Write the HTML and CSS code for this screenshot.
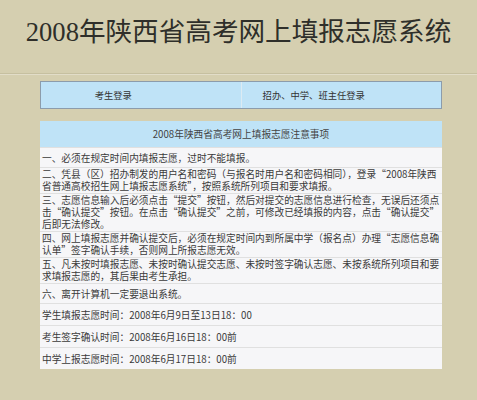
FILE: index.html
```html
<!DOCTYPE html>
<html lang="zh-CN">
<head>
    <meta charset="UTF-8">
    <meta name="viewport" content="width=device-width, initial-scale=1.0">
    <title>2008年陕西省高考网上填报志愿系统</title>
    <link rel="stylesheet" href="styles.css">
</head>
<body>
    <div class="header">
        <h1 class="title">2008年陕西省高考网上填报志愿系统</h1>
    </div>

    <div class="login-bar">
        <a class="login-tab" href="#">考生登录</a>
        <a class="login-tab" href="#">招办、中学、班主任登录</a>
    </div>

    <div class="notice">
        <div class="notice-head">2008年陕西省高考网上填报志愿注意事项</div>
        <div class="notice-row single">一、必须在规定时间内填报志愿，过时不能填报。</div>
        <div class="notice-row">二、凭县（区）招办制发的用户名和密码（与报名时用户名和密码相同），登录“2008年陕西<br>省普通高校招生网上填报志愿系统”，按照系统所列项目和要求填报。</div>
        <div class="notice-row">三、志愿信息输入后必须点击“提交”按钮，然后对提交的志愿信息进行检查，无误后还须点<br>击“确认提交”按钮。在点击“确认提交”之前，可修改已经填报的内容，点击“确认提交”<br>后即无法修改。</div>
        <div class="notice-row">四、网上填报志愿并确认提交后，必须在规定时间内到所属中学（报名点）办理“志愿信息确<br>认单”签字确认手续，否则网上所报志愿无效。</div>
        <div class="notice-row">五、凡未按时填报志愿、未按时确认提交志愿、未按时签字确认志愿、未按系统所列项目和要<br>求填报志愿的，其后果由考生承担。</div>
        <div class="notice-row single">六、离开计算机一定要退出系统。</div>
        <div class="notice-row single time">学生填报志愿时间：2008年6月9日至13日18：00</div>
        <div class="notice-row single time">考生签字确认时间：2008年6月16日18：00前</div>
        <div class="notice-row single time">中学上报志愿时间：2008年6月17日18：00前</div>
    </div>
</body>
</html>
```

FILE: styles.css
```css
body {
    margin: 0;
    background-color: #d5cfb0;
    font-family: "Noto Sans CJK SC", sans-serif;
    color: #3a3a3a;
}
.header {
    height: 73px;
    border-bottom: 1px solid #c6c0a0;
    box-shadow: 0 1px 0 #e2ddc8;
    display: flex;
    align-items: center;
    justify-content: center;
}
.title {
    margin: 0 0 14px 0;
    font-family: "Liberation Serif", "Noto Sans CJK SC", serif;
    font-size: 26.6px;
    font-weight: normal;
    color: #2f2f2a;
}
.login-bar {
    display: flex;
    width: 400px;
    height: 26px;
    margin: 7px 0 0 40px;
    background-color: #bfe3f7;
    border: 1px solid #8c9cab;
}
.login-tab {
    flex: 1;
    display: flex;
    align-items: center;
    justify-content: center;
    padding-right: 55px;
    font-size: 9.3px;
    color: #333;
    text-decoration: none;
}
.login-tab + .login-tab {
    border-left: 1px solid #dcebf3;
}
.notice {
    width: 402px;
    margin: 12px 0 0 40px;
    display: flex;
    flex-direction: column;
    gap: 1px;
    background-color: #e0e0e0;
    font-size: 9.7px;
    line-height: 12px;
}
.notice-head {
    height: 26px;
    display: flex;
    align-items: center;
    justify-content: center;
    background-color: #bfe3f7;
    color: #444;
}
.notice-row {
    padding: 0 2px 1px 2px;
    background-color: #f6f6f8;
    white-space: nowrap;
}
.notice-row.single {
    min-height: 19px;
    padding-bottom: 0;
    display: flex;
    align-items: center;
}
.notice-row.time {
    min-height: 21px;
}
```
